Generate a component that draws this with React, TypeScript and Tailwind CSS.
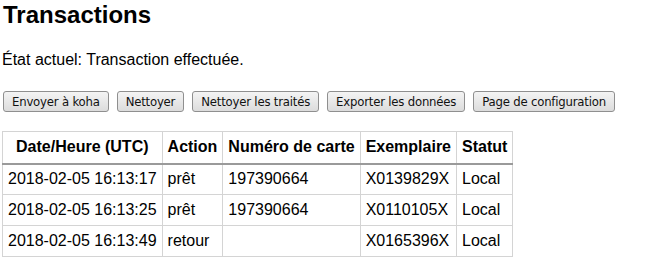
const rows = [
  { date: '2018-02-05 16:13:17', action: 'prêt', card: '197390664', item: 'X0139829X', status: 'Local' },
  { date: '2018-02-05 16:13:25', action: 'prêt', card: '197390664', item: 'X0110105X', status: 'Local' },
  { date: '2018-02-05 16:13:49', action: 'retour', card: '', item: 'X0165396X', status: 'Local' },
]

const buttons = ['Envoyer à koha', 'Nettoyer', 'Nettoyer les traités', 'Exporter les données', 'Page de configuration']

const App = () => {
  return (
    <div className="bg-white text-black px-[2px] font-['Liberation_Sans',Arial,sans-serif] w-[645px] h-[272px] overflow-hidden">
      <h1 className="text-[24px] leading-[28px] font-bold pt-[1px] pl-[1px]">Transactions</h1>
      <p className="text-[16px] leading-[18px] mt-[22px]">État actuel: Transaction effectuée.</p>

      <div className="flex gap-[8px] mt-[22px] pl-[1px]">
        {buttons.map((b) => (
          <button
            key={b}
            className="h-[21px] px-[8px] text-[13px] leading-[19px] text-[#111] whitespace-nowrap border border-[#8f8f8f] rounded-[3px] bg-gradient-to-b from-[#f4f4f4] to-[#dcdcdc] font-['DejaVu_Sans_Condensed','Liberation_Sans',sans-serif] tracking-[-0.2px]"
          >
            {b}
          </button>
        ))}
      </div>

      <table className="mt-[19px] border-collapse text-[16px] leading-[18px] whitespace-nowrap">
        <thead>
          <tr className="h-[32px]">
            <th className="border border-[#d4d4d4] border-b-2 border-b-[#9a9a9a] px-[5px] font-bold">Date/Heure (UTC)</th>
            <th className="border border-[#d4d4d4] border-b-2 border-b-[#9a9a9a] px-[5px] font-bold">Action</th>
            <th className="border border-[#d4d4d4] border-b-2 border-b-[#9a9a9a] px-[5px] font-bold">Numéro de carte</th>
            <th className="border border-[#d4d4d4] border-b-2 border-b-[#9a9a9a] px-[5px] font-bold">Exemplaire</th>
            <th className="border border-[#d4d4d4] border-b-2 border-b-[#9a9a9a] px-[5px] font-bold">Statut</th>
          </tr>
        </thead>
        <tbody>
          {rows.map((r) => (
            <tr key={r.date} className="h-[31px]">
              <td className="border border-[#d4d4d4] px-[5px]">{r.date}</td>
              <td className="border border-[#d4d4d4] px-[5px]">{r.action}</td>
              <td className="border border-[#d4d4d4] px-[5px]">{r.card}</td>
              <td className="border border-[#d4d4d4] px-[5px]">{r.item}</td>
              <td className="border border-[#d4d4d4] px-[5px]">{r.status}</td>
            </tr>
          ))}
        </tbody>
      </table>
    </div>
  )
}

export default App
